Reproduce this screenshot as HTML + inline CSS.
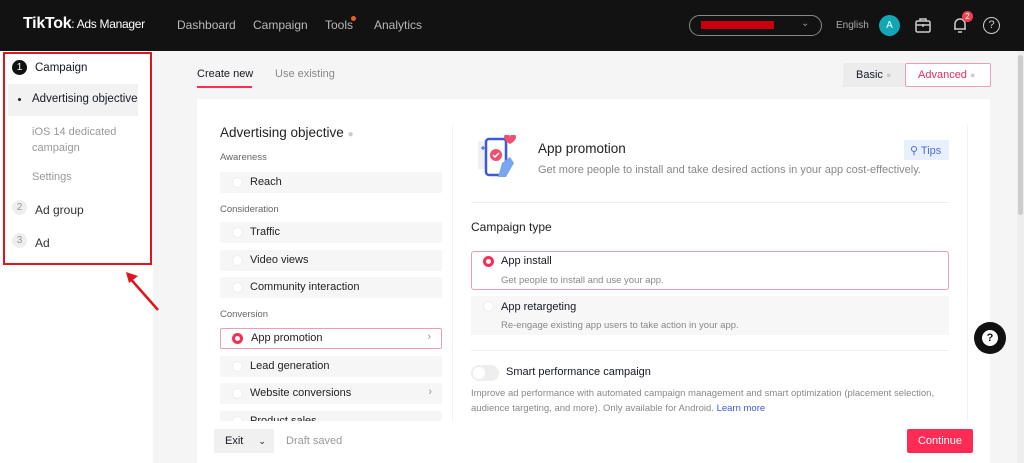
<!DOCTYPE html>
<html><head><meta charset="utf-8"><style>
*{box-sizing:border-box;margin:0;padding:0}
body{width:1024px;height:463px;overflow:hidden;font-family:"Liberation Sans",Arial,sans-serif;background:#f5f5f5;position:relative;color:#161823}
.abs{position:absolute;white-space:nowrap}
.hdr{left:0;top:0;width:1024px;height:51px;background:#121212}
.nav{color:#b8b8b8;font-size:12px;top:18px}
.side{left:0;top:51px;width:153px;height:412px;background:#fff}
.redbox{left:3px;top:52px;width:149px;height:213px;border:2px solid #e0141e}
.step{font-size:12px}
.num{width:15px;height:15px;border-radius:50%;font-size:10px;text-align:center;line-height:15px}
.card{left:197px;top:99px;width:793px;height:322px;background:#fff}
.opt{left:220px;width:222px;height:21px;background:#f6f6f6;border-radius:2px;font-size:11px;color:#222}
.opt .r{position:absolute;left:12px;top:5px;width:11px;height:11px;border-radius:50%;background:#fff;border:1px solid #eee}
.opt span{position:absolute;left:30px;top:4px}
.opt .ch{left:auto;right:10px;color:#999;top:3px}
.lbl{left:220px;font-size:9.5px;color:#666}
.rad{width:11px;height:11px;border-radius:50%;border:3px solid #fe2c55;background:#fff}
.sub{font-size:9.5px;color:#888}
</style></head><body>
<div class="abs hdr"></div>
<div class="abs" style="left:23px;top:15px;color:#fff;font-weight:bold;font-size:16px;letter-spacing:-0.3px">TikTok<span style="font-size:12px;font-weight:normal">: Ads Manager</span></div>
<div class="abs nav" style="left:177px">Dashboard</div>
<div class="abs nav" style="left:253px">Campaign</div>
<div class="abs nav" style="left:325px">Tools</div>
<div class="abs" style="left:351px;top:16px;width:5px;height:5px;border-radius:50%;background:#f05a28"></div>
<div class="abs nav" style="left:374px">Analytics</div>
<div class="abs" style="left:689px;top:15px;width:133px;height:21px;border:1px solid #888;border-radius:11px"></div>
<div class="abs" style="left:701px;top:21px;width:73px;height:8px;background:#c8000e"></div>
<div class="abs" style="left:801px;top:18px;color:#999;font-size:10px">⌄</div>
<div class="abs" style="left:836px;top:20px;color:#aaa;font-size:10px">English</div>
<div class="abs" style="left:879px;top:15px;width:21px;height:21px;border-radius:50%;background:#11a7b4;color:#fff;font-size:10px;text-align:center;line-height:21px">A</div>
<svg class="abs" style="left:913px;top:15px" width="20" height="20" viewBox="0 0 20 20" fill="none" stroke="#ccc" stroke-width="1.5"><rect x="3" y="6" width="14" height="11" rx="1.5"/><path d="M7 6V4h6v2M3 10h14M10 9v3"/></svg>
<svg class="abs" style="left:950px;top:15px" width="20" height="20" viewBox="0 0 20 20" fill="none" stroke="#ccc" stroke-width="1.5"><path d="M5 14V9a5 5 0 0110 0v5H4h12M8 17h4"/></svg>
<div class="abs" style="left:962px;top:11px;width:11px;height:11px;border-radius:50%;background:#f04050;color:#fff;font-size:8px;text-align:center;line-height:11px">2</div>
<div class="abs" style="left:983px;top:17px;width:17px;height:17px;border-radius:50%;border:1.5px solid #ccc;color:#ccc;font-size:11px;text-align:center;line-height:14px">?</div>

<div class="abs side"></div>
<div class="abs" style="left:8px;top:84px;width:130px;height:32px;background:#f2f2f2"></div>
<div class="abs num" style="left:12px;top:60px;background:#111;color:#fff">1</div>
<div class="abs step" style="left:35px;top:62px;font-size:11.5px">Campaign</div>
<div class="abs" style="left:18px;top:98px;width:3px;height:3px;border-radius:50%;background:#222"></div>
<div class="abs step" style="left:32px;top:93px;font-size:11.5px">Advertising objective</div>
<div class="abs step" style="left:32px;top:124px;color:#999;font-size:11px;line-height:16px">iOS 14 dedicated<br>campaign</div>
<div class="abs step" style="left:32px;top:171px;color:#999;font-size:11px">Settings</div>
<div class="abs num" style="left:12px;top:200px;background:#eee;color:#999">2</div>
<div class="abs step" style="left:35px;top:203px;color:#333">Ad group</div>
<div class="abs num" style="left:12px;top:233px;background:#eee;color:#999">3</div>
<div class="abs step" style="left:35px;top:236px;color:#333">Ad</div>
<div class="abs redbox"></div>
<svg class="abs" style="left:122px;top:268px" width="40" height="45" viewBox="0 0 40 45"><path d="M36 42L6 8" stroke="#e0141e" stroke-width="2.5"/><path d="M4 4l12 4-9 7z" fill="#e0141e"/></svg>

<div class="abs" style="left:197px;top:68px;font-size:11px">Create new</div>
<div class="abs" style="left:197px;top:86px;width:55px;height:2px;background:#fe2c55"></div>
<div class="abs" style="left:275px;top:68px;font-size:11px;color:#888">Use existing</div>
<div class="abs" style="left:843px;top:63px;width:62px;height:24px;background:#ececec;font-size:11px;padding:6px 13px">Basic <span style="color:#ccc;font-size:9px">●</span></div>
<div class="abs" style="left:905px;top:63px;width:86px;height:24px;background:#fff;border:1px solid #e8a0b0;border-radius:2px;font-size:11px;color:#e0305a;padding:5px 12px">Advanced <span style="color:#ccc;font-size:9px">●</span></div>
<div class="abs" style="left:1017px;top:51px;width:7px;height:412px;background:#eee"></div>
<div class="abs" style="left:1018px;top:55px;width:5px;height:160px;background:#ccc;border-radius:3px"></div>

<div class="abs card"></div>
<div class="abs" style="left:220px;top:125px;font-size:13.5px;color:#222">Advertising objective <span style="color:#ccc;font-size:10px">●</span></div>
<div class="abs lbl" style="top:152px">Awareness</div>
<div class="abs opt" style="top:172px"><i class="r"></i><span>Reach</span></div>
<div class="abs lbl" style="top:204px">Consideration</div>
<div class="abs opt" style="top:222px"><i class="r"></i><span>Traffic</span></div>
<div class="abs opt" style="top:250px"><i class="r"></i><span>Video views</span></div>
<div class="abs opt" style="top:277px"><i class="r"></i><span>Community interaction</span></div>
<div class="abs lbl" style="top:309px">Conversion</div>
<div class="abs opt" style="top:328px;background:#fff;border:1px solid #e8a0b0"><i class="r rad" style="left:11px;top:4px;border:3px solid #fe2c55"></i><span style="top:3px">App promotion</span><span class="ch" style="top:2px">›</span></div>
<div class="abs opt" style="top:356px"><i class="r"></i><span>Lead generation</span></div>
<div class="abs opt" style="top:383px"><i class="r"></i><span>Website conversions</span><span class="ch">›</span></div>
<div class="abs opt" style="top:411px;height:10px;overflow:hidden"><i class="r"></i><span style="top:4px">Product sales</span></div>

<div class="abs" style="left:452px;top:125px;width:516px;height:296px;border-left:1px solid #f0f0f0;border-right:1px solid #f0f0f0"></div>
<svg class="abs" style="left:476px;top:135px" width="44" height="48" viewBox="0 0 44 48"><rect x="2" y="6" width="30" height="28" fill="#eef0f6"/><rect x="10" y="4" width="20" height="36" rx="3" fill="#fff" stroke="#3b5bdb" stroke-width="2.5"/><circle cx="20" cy="20" r="6" fill="#f05070"/><path d="M17 20l2 2 4-4" stroke="#fff" stroke-width="1.5" fill="none"/><path d="M28 2a3 3 0 016 0 3 3 0 016 0c0 4-6 7-6 7s-6-3-6-7z" fill="#f05070"/><path d="M26 28l8-6 4 6-8 14h-8z" fill="#7aa6f0"/><path d="M5 13h4M7 11v4" stroke="#3b5bdb"/></svg>
<div class="abs" style="left:538px;top:141px;font-size:13.5px;color:#222">App promotion</div>
<div class="abs" style="left:538px;top:164px;font-size:11px;color:#888">Get more people to install and take desired actions in your app cost-effectively.</div>
<div class="abs" style="left:904px;top:140px;width:45px;height:20px;background:#e8f0fe;border-radius:2px;color:#4a6ee0;font-size:11px;padding:4px 6px">⚲ Tips</div>
<div class="abs" style="left:471px;top:202px;width:478px;height:1px;background:#eee"></div>
<div class="abs" style="left:471px;top:220px;font-size:12px;color:#222">Campaign type</div>
<div class="abs" style="left:471px;top:251px;width:478px;height:39px;border:1px solid #e8a0b0;border-radius:3px"></div>
<div class="abs rad" style="left:483px;top:256px"></div>
<div class="abs" style="left:501px;top:255px;font-size:11px">App install</div>
<div class="abs sub" style="left:501px;top:275px">Get people to install and use your app.</div>
<div class="abs" style="left:471px;top:296px;width:478px;height:39px;background:#f7f7f7"></div>
<div class="abs" style="left:483px;top:301px;width:11px;height:11px;border-radius:50%;background:#fff;border:1px solid #eee"></div>
<div class="abs" style="left:501px;top:301px;font-size:11px">App retargeting</div>
<div class="abs sub" style="left:501px;top:320px">Re-engage existing app users to take action in your app.</div>
<div class="abs" style="left:471px;top:350px;width:478px;height:1px;background:#eee"></div>
<div class="abs" style="left:471px;top:365px;width:28px;height:16px;border-radius:8px;background:#eee"></div>
<div class="abs" style="left:473px;top:367px;width:12px;height:12px;border-radius:50%;background:#fff"></div>
<div class="abs" style="left:506px;top:366px;font-size:11px">Smart performance campaign</div>
<div class="abs sub" style="left:471px;top:386px;line-height:15px">Improve ad performance with automated campaign management and smart optimization (placement selection,<br>audience targeting, and more). Only available for Android. <span style="color:#3b5bdb">Learn more</span></div>
<div class="abs" style="left:974px;top:322px;width:32px;height:32px;border-radius:50%;background:#111;"></div>
<div class="abs" style="left:982px;top:330px;width:16px;height:16px;border-radius:50%;background:#fff;color:#111;font-weight:bold;font-size:11px;text-align:center;line-height:16px">?</div>

<div class="abs" style="left:197px;top:421px;width:793px;height:42px;background:#fff"></div>
<div class="abs" style="left:214px;top:429px;width:60px;height:24px;background:#f0f0f0;font-size:11px;padding:6px 11px">Exit <span style="font-size:9px;margin-left:12px">⌄</span></div>
<div class="abs" style="left:286px;top:435px;font-size:11px;color:#999">Draft saved</div>
<div class="abs" style="left:907px;top:429px;width:66px;height:24px;background:#fe2c55;border-radius:2px;color:#fff;font-size:11px;text-align:center;line-height:24px">Continue</div>
</body></html>
